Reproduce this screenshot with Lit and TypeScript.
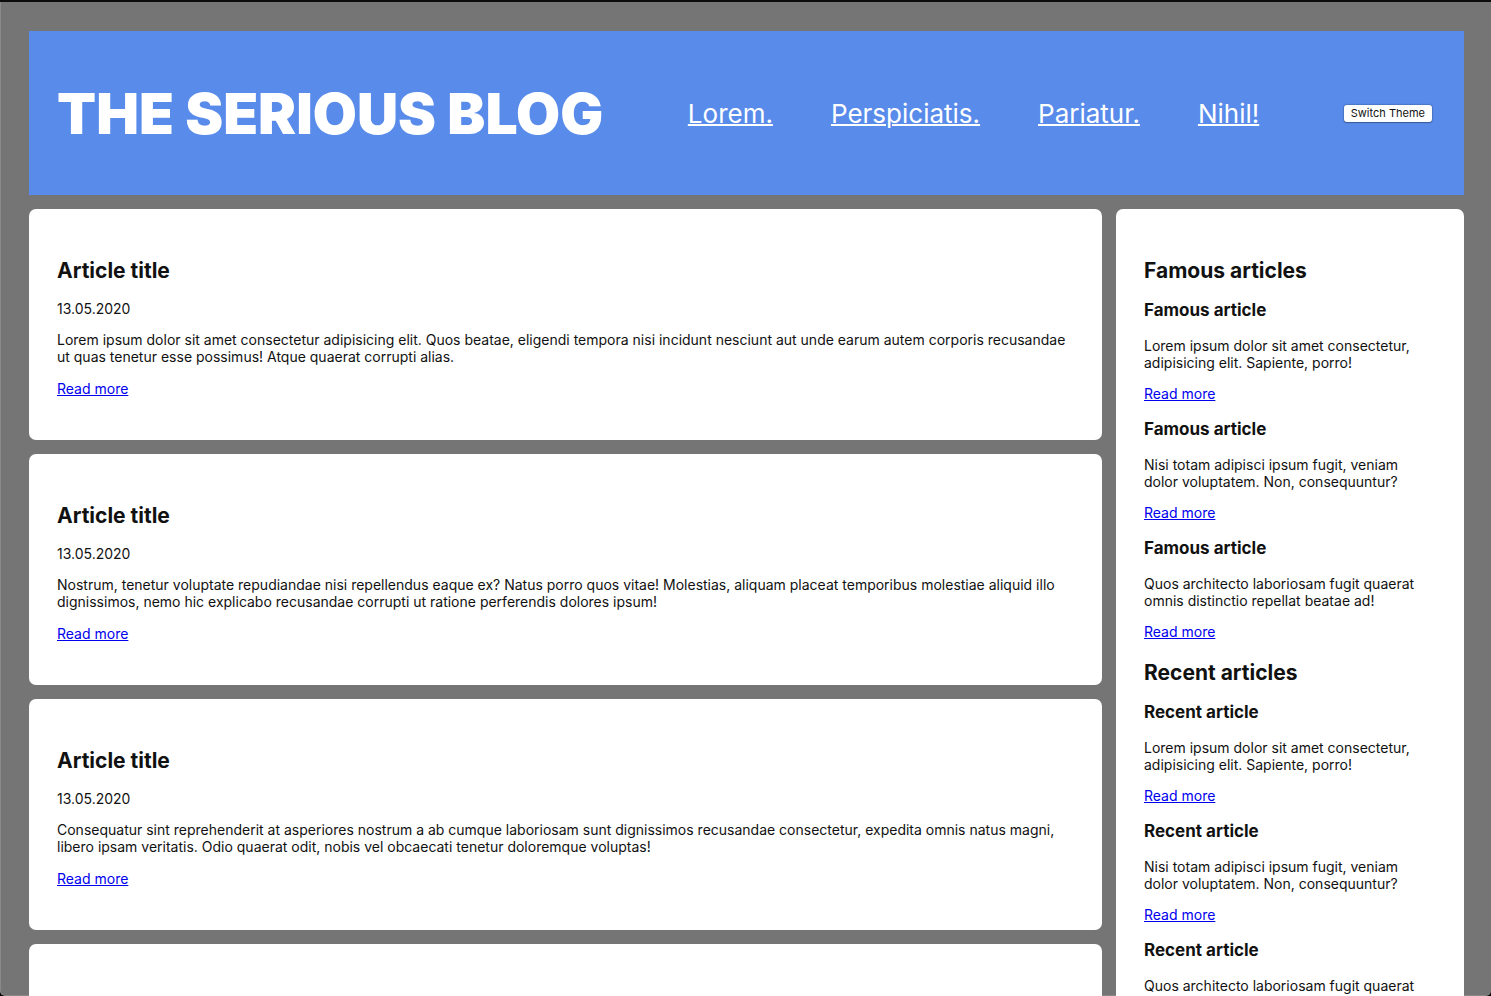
import { LitElement, html, css } from "lit";
import { customElement } from "lit/decorators.js";

const nav = ["Lorem.", "Perspiciatis.", "Pariatur.", "Nihil!"];

const articles = [
  "Lorem ipsum dolor sit amet consectetur adipisicing elit. Quos beatae, eligendi tempora nisi incidunt nesciunt aut unde earum autem corporis recusandae ut quas tenetur esse possimus! Atque quaerat corrupti alias.",
  "Nostrum, tenetur voluptate repudiandae nisi repellendus eaque ex? Natus porro quos vitae! Molestias, aliquam placeat temporibus molestiae aliquid illo dignissimos, nemo hic explicabo recusandae corrupti ut ratione perferendis dolores ipsum!",
  "Consequatur sint reprehenderit at asperiores nostrum a ab cumque laboriosam sunt dignissimos recusandae consectetur, expedita omnis natus magni, libero ipsam veritatis. Odio quaerat odit, nobis vel obcaecati tenetur doloremque voluptas!",
  "Lorem ipsum dolor sit amet consectetur adipisicing elit.",
];

const teasers = [
  "Lorem ipsum dolor sit amet consectetur, adipisicing elit. Sapiente, porro!",
  "Nisi totam adipisci ipsum fugit, veniam dolor voluptatem. Non, consequuntur?",
  "Quos architecto laboriosam fugit quaerat omnis distinctio repellat beatae ad!",
];

@customElement("app-root")
export class AppRoot extends LitElement {
  static styles = css`
    :host {
      display: block;
      box-sizing: border-box;
      height: 100vh;
      overflow-y: auto;
      scrollbar-width: none;
      padding: 29px 27px 0 29px;
      border-top: 2px solid #0c0c0c;
      background: #757575;
      color: #111;
      font: 14px/17px Inter, sans-serif;
    }
    * { box-sizing: border-box; }

    /* Thin window edge with rounded bottom corners */
    .frame {
      position: fixed;
      inset: 2px 0 0 0;
      overflow: hidden;
      pointer-events: none;
    }
    .frame::after {
      content: "";
      position: absolute;
      inset: -8px 0 0 0;
      border: 1px solid rgba(255, 255, 255, 0.15);
      border-right: 0;
      border-radius: 0 0 5px 5px;
      box-shadow: 0 0 0 8px #000;
    }

    .header {
      display: flex;
      align-items: center;
      justify-content: space-between;
      height: 164px;
      padding: 0 32px 0 28px;
      margin-bottom: 14px;
      background: #588bea;
      color: #fff;
    }
    h1, nav { padding-top: 2px; }
    h1 { margin: 0; font-size: 57px; line-height: 68px; font-weight: 900; white-space: nowrap; }
    nav { display: flex; gap: 58px; font-size: 26px; line-height: 34px; }
    nav a { color: #fff; text-decoration-thickness: 2px; }
    button {
      height: 17px;
      padding: 0 7px;
      border: 0;
      border-radius: 3px;
      background: #fff;
      color: #111;
      font: 11px/17px Inter, sans-serif;
      box-shadow: 0 0 1px 1px rgba(0, 0, 0, 0.15), 0 1px 1px rgba(0, 0, 0, 0.25);
    }
    .columns { display: grid; grid-template-columns: minmax(0, 1fr) 348px; gap: 14px; }
    main { display: flex; flex-direction: column; gap: 14px; }
    .card { background: #fff; border-radius: 7px; padding: 49px 28px 43px; }
    h2 { margin: 0 0 16px; font-size: 21px; line-height: 26px; font-weight: 700; }
    h3 { margin: 0 0 17px; font-size: 17px; line-height: 20px; font-weight: 700; }
    p { margin: 0 0 14px; }
    .card > .body { margin-bottom: 15px; }
    .card > a, .teaser > a { color: #0000ee; display: block; width: fit-content; }
    .teaser { margin-bottom: 17px; }
    section { margin-bottom: 20px; }
  `;

  teaserList(kind: string) {
    return html`<section>
      <h2>${kind} articles</h2>
      ${teasers.map(
        (text) => html`<div class="teaser">
          <h3>${kind} article</h3>
          <p>${text}</p>
          <a href="#">Read more</a>
        </div>`
      )}
    </section>`;
  }

  render() {
    return html`
      <header class="header">
        <h1>THE SERIOUS BLOG</h1>
        <nav>${nav.map((label) => html`<a href="#">${label}</a>`)}</nav>
        <button type="button">Switch Theme</button>
      </header>
      <div class="columns">
        <main>
          ${articles.map(
            (text) => html`<article class="card">
              <h2>Article title</h2>
              <p>13.05.2020</p>
              <p class="body">${text}</p>
              <a href="#">Read more</a>
            </article>`
          )}
        </main>
        <aside class="card">${this.teaserList("Famous")}${this.teaserList("Recent")}</aside>
      </div>
      <div class="frame"></div>
    `;
  }
}
